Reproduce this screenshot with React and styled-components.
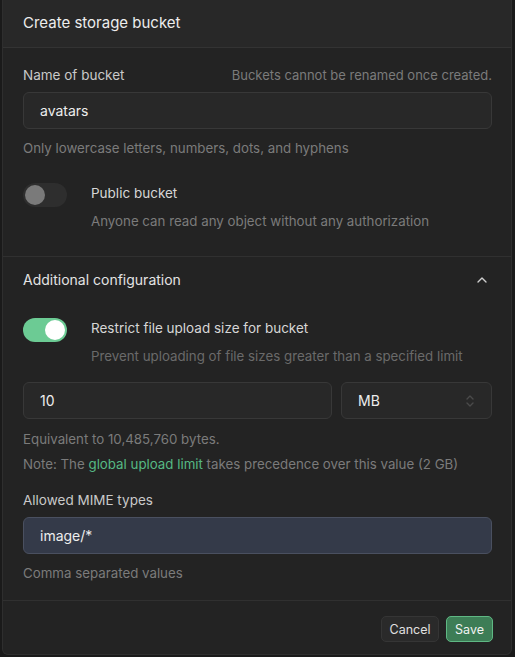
import React from 'react'
import styled, { createGlobalStyle } from 'styled-components'

const Global = createGlobalStyle`
  html, body {
    margin: 0;
    padding: 0;
    background: #1a1a1a;
    font-family: Inter, "Noto Sans", sans-serif;
    line-height: 20px;
    -webkit-font-smoothing: antialiased;
  }
`;

const Backdrop = styled.div`
  width: 515px;
  height: 657px;
  padding: 0 3px 2px 2px;
  box-sizing: border-box;
  display: flex;
  flex-direction: column;
  background: #1a1a1a;
`;

const Modal = styled.div`
  flex: 1;
  display: flex;
  flex-direction: column;
  background: #232323;
  border: 1px solid #2e2e2e;
  border-top: none;
  border-radius: 0 0 6px 6px;
  overflow: hidden;
`;

const Header = styled.div`
  height: 46px;
  display: flex;
  align-items: center;
  padding: 0 20px 1px;
  background: #282828;
  border-bottom: 1px solid #333;
  font-size: 15px;
  color: #ededed;
`;

const Section = styled.div`
  padding: ${p => p.$pad};
  border-bottom: ${p => (p.$last ? 'none' : '1px solid #303030')};
  display: flex;
  flex-direction: column;
`;

const LabelRow = styled.div`
  display: flex;
  justify-content: space-between;
  align-items: center;
  height: 20px;
  margin-top: ${p => p.$mt || 0}px;
  margin-bottom: 7px;
`;

const Label = styled.span`
  font-size: 13.5px;
  color: #c9c9c9;
`;

const Hint = styled.span`
  font-size: ${p => p.$size || 13}px;
  color: ${p => p.$color || '#7b7b7b'};
`;

const Input = styled.div`
  height: 37px;
  box-sizing: border-box;
  display: flex;
  align-items: center;
  justify-content: space-between;
  padding: 0 16px;
  border-radius: 6px;
  border: 1px solid ${p => (p.$filled ? '#4a5060' : '#383838')};
  background: ${p => (p.$filled ? '#343a49' : '#282828')};
  font-size: 14px;
  color: #ededed;
  flex: ${p => p.$grow || 'none'};
  width: ${p => (p.$width ? `${p.$width}px` : 'auto')};
`;

const Help = styled.div`
  font-size: 13.3px;
  color: #7b7b7b;
  margin-top: ${p => p.$mt || 9}px;
`;

const Link = styled.span`
  color: #56b883;
`;

const ToggleRow = styled.div`
  display: flex;
  gap: 24px;
  margin-top: ${p => p.$mt || 0}px;
`;

const Track = styled.div`
  width: 44px;
  height: 24px;
  border-radius: 12px;
  flex-shrink: 0;
  box-sizing: border-box;
  padding: 2px;
  display: flex;
  justify-content: ${p => (p.$on ? 'flex-end' : 'flex-start')};
  background: ${p => (p.$on ? '#6ccb94' : '#2e2e2e')};
`;

const Knob = styled.div`
  width: 20px;
  height: 20px;
  border-radius: 50%;
  background: ${p => (p.$on ? '#ffffff' : '#7a7a7a')};
`;

const ToggleText = styled.div`
  display: flex;
  flex-direction: column;
  gap: 8px;
`;

const ToggleTitle = styled.span`
  font-size: 13.5px;
  color: #d6d6d6;
`;

const CollapseHead = styled.div`
  display: flex;
  justify-content: space-between;
  align-items: center;
  height: 20px;
  color: #e4e4e4;
  font-size: 14px;
`;

const Row = styled.div`
  display: flex;
  gap: 9px;
  margin-top: 16px;
`;

const Footer = styled.div`
  flex: 1;
  border-top: 1px solid #303030;
  display: flex;
  justify-content: flex-end;
  align-items: flex-start;
  gap: 7px;
  padding: 15px 18px 0 0;
`;

const Button = styled.button`
  height: 26px;
  padding: 0 7px;
  border-radius: 5px;
  font-family: inherit;
  font-size: 12.5px;
  cursor: pointer;
  color: ${p => (p.$primary ? '#f2f2f2' : '#e0e0e0')};
  background: ${p => (p.$primary ? '#3d7d56' : '#2a2a2a')};
  border: 1px solid ${p => (p.$primary ? '#5fb884' : '#353535')};
  min-width: ${p => p.$min}px;
`;

const Toggle = ({ on }) => (
  <Track $on={on}>
    <Knob $on={on} />
  </Track>
)

export default function App() {
  return (
    <>
      <Global />
      <Backdrop>
        <Modal>
          <Header>Create storage bucket</Header>
          <Section $pad="17px 19px 25px 20px">
            <LabelRow>
              <Label>Name of bucket</Label>
              <Hint>Buckets cannot be renamed once created.</Hint>
            </LabelRow>
            <Input>avatars</Input>
            <Help>Only lowercase letters, numbers, dots, and hyphens</Help>
            <ToggleRow $mt={25}>
              <Toggle on={false} />
              <ToggleText>
                <ToggleTitle>Public bucket</ToggleTitle>
                <Hint $size={13.3}>Anyone can read any object without any authorization</Hint>
              </ToggleText>
            </ToggleRow>
          </Section>
          <Section $last $pad="13px 19px 17px 20px">
            <CollapseHead>
              <span>Additional configuration</span>
              <svg width="16" height="16" viewBox="0 0 24 24" fill="none" stroke="#d0d0d0" strokeWidth="2" strokeLinecap="round" strokeLinejoin="round" style={{ marginRight: 2 }}>
                <polyline points="18 15 12 9 6 15" />
              </svg>
            </CollapseHead>
            <ToggleRow $mt={28}>
              <Toggle on />
              <ToggleText>
                <ToggleTitle>Restrict file upload size for bucket</ToggleTitle>
                <Hint $size={13.3} $color="#6a6a6a">Prevent uploading of file sizes greater than a specified limit</Hint>
              </ToggleText>
            </ToggleRow>
            <Row>
              <Input $grow="1">10</Input>
              <Input $width={151}>
                <span>MB</span>
                <svg width="10" height="16" viewBox="0 0 10 16" fill="none" stroke="#4a4a4a" strokeWidth="1.4" strokeLinecap="round" strokeLinejoin="round">
                  <polyline points="2 6 5 3 8 6" />
                  <polyline points="2 10 5 13 8 10" />
                </svg>
              </Input>
            </Row>
            <Help $mt={10}>Equivalent to 10,485,760 bytes.</Help>
            <Help $mt={5}>
              Note: The <Link>global upload limit</Link> takes precedence over this value (2 GB)
            </Help>
            <LabelRow $mt={16}>
              <Label>Allowed MIME types</Label>
            </LabelRow>
            <Input $filled>image/*</Input>
            <Help $mt={9}>Comma separated values</Help>
          </Section>
          <Footer>
            <Button $min={58}>Cancel</Button>
            <Button $primary $min={47}>Save</Button>
          </Footer>
        </Modal>
      </Backdrop>
    </>
  )
}
